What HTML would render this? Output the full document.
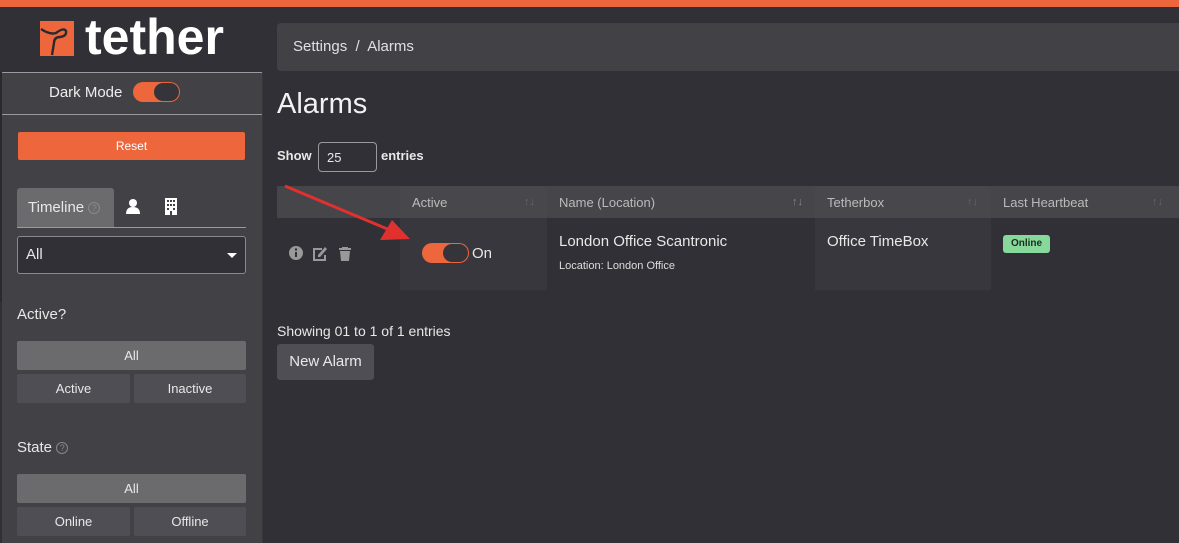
<!DOCTYPE html>
<html><head><style>
*{box-sizing:border-box;margin:0;padding:0}
body{width:1179px;height:543px;overflow:hidden;background:#313036;font-family:"Liberation Sans",sans-serif;color:#e8e8e8;position:relative}
.a{position:absolute}
.btn{position:absolute;text-align:center;font-size:13px;border-radius:2px}
.q{display:inline-block;width:12px;height:12px;border:1px solid #888;border-radius:50%;font-size:9px;line-height:10px;text-align:center;color:#888;vertical-align:1px}
</style></head><body>
<div class="a" style="left:0;top:0;width:1179px;height:7px;background:#ee663b"></div>
<div class="a" style="left:2px;top:7px;width:260px;height:65px;background:#313036"></div>
<div class="a" style="left:2px;top:72px;width:260px;height:471px;background:#424146;border-top:1px solid #9a9a9e"></div>
<div class="a" style="left:0;top:72px;width:2px;height:230px;background:#2a292e"></div>
<div class="a" style="left:262px;top:72px;width:1px;height:471px;background:#38373c"></div>
<div class="a" style="left:40px;top:21px;width:34px;height:35px;background:#ee663b"></div>
<svg class="a" style="left:40px;top:21px" width="34" height="35"><path d="M1 8 Q10 14 16 12 Q24 6 26 10 Q27 15 20 16 Q14 16 14 22 L12 34" fill="none" stroke="#2a2a2e" stroke-width="2.4"/></svg>
<div class="a" style="left:85px;top:8px;font-size:50px;font-weight:bold;color:#fff;letter-spacing:0px">tether</div>
<div class="a" style="left:2px;top:114px;width:260px;height:1px;background:#9a9a9e"></div>
<div class="a" style="left:49px;top:84px;font-size:15px;color:#eee">Dark Mode</div>
<div class="a" style="left:133px;top:82px;width:47px;height:20px;border-radius:10px;background:#ee663b"></div>
<div class="a" style="left:154px;top:83px;width:25px;height:18px;border-radius:9px;background:#35343a"></div>
<div class="btn" style="left:18px;top:132px;width:227px;height:28px;line-height:28px;background:#ee663b;color:#fff;font-size:12px">Reset</div>
<div class="a" style="left:17px;top:188px;width:97px;height:40px;background:#6b6b6d;border-radius:3px 3px 0 0"></div>
<div class="a" style="left:28px;top:199px;font-size:15px;color:#e8e8e8">Timeline <span class="q">?</span></div>
<svg class="a" style="left:125px;top:198px" width="16" height="16"><circle cx="8" cy="5" r="4" fill="#fff"/><path d="M1 16 Q1 9 8 9 Q15 9 15 16Z" fill="#fff"/></svg>
<svg class="a" style="left:164px;top:198px" width="14" height="17"><path d="M1 0H13V17H8V13H6V17H1Z" fill="#fff"/><g fill="#424146"><rect x="3" y="2" width="2" height="2"/><rect x="6" y="2" width="2" height="2"/><rect x="9" y="2" width="2" height="2"/><rect x="3" y="6" width="2" height="2"/><rect x="6" y="6" width="2" height="2"/><rect x="9" y="6" width="2" height="2"/><rect x="3" y="10" width="2" height="2"/><rect x="9" y="10" width="2" height="2"/></g></svg>
<div class="a" style="left:17px;top:227px;width:229px;height:1px;background:#9a9a9e"></div>
<div class="a" style="left:17px;top:236px;width:229px;height:38px;background:#303036;border:1px solid #8a8a8e;border-radius:3px"></div>
<div class="a" style="left:26px;top:246px;font-size:15px">All</div>
<div class="a" style="left:227px;top:253px;border-left:5px solid transparent;border-right:5px solid transparent;border-top:5px solid #fff"></div>
<div class="a" style="left:17px;top:306px;font-size:15px">Active?</div>
<div class="btn" style="left:17px;top:341px;width:229px;height:29px;line-height:29px;background:#6b6b6d">All</div>
<div class="btn" style="left:17px;top:374px;width:113px;height:29px;line-height:29px;background:#4f4e54">Active</div>
<div class="btn" style="left:134px;top:374px;width:112px;height:29px;line-height:29px;background:#4f4e54">Inactive</div>
<div class="a" style="left:17px;top:439px;font-size:15px">State <span class="q">?</span></div>
<div class="btn" style="left:17px;top:474px;width:229px;height:29px;line-height:29px;background:#6b6b6d">All</div>
<div class="btn" style="left:17px;top:507px;width:113px;height:29px;line-height:29px;background:#4f4e54">Online</div>
<div class="btn" style="left:134px;top:507px;width:112px;height:29px;line-height:29px;background:#4f4e54">Offline</div>
<div class="a" style="left:277px;top:23px;width:910px;height:48px;background:#424146;border-radius:4px"></div>
<div class="a" style="left:293px;top:38px;font-size:15px;color:#e0e0e0">Settings &nbsp;/&nbsp; Alarms</div>
<div class="a" style="left:277px;top:88px;font-size:29px;color:#f2f2f2">Alarms</div>
<div class="a" style="left:277px;top:148px;font-size:13px;font-weight:bold">Show</div>
<div class="a" style="left:318px;top:142px;width:59px;height:30px;border:1px solid #9a9a9e;border-radius:4px;font-size:13px;padding:7px 0 0 8px">25</div>
<div class="a" style="left:381px;top:148px;font-size:13px;font-weight:bold">entries</div>
<div class="a" style="left:277px;top:186px;width:902px;height:32px;background:#46454a"></div>
<div class="a" style="left:400px;top:186px;width:147px;height:104px;background:#4a494e;opacity:.55"></div>
<div class="a" style="left:815px;top:186px;width:176px;height:104px;background:#4a494e;opacity:.55"></div>
<div class="a" style="left:400px;top:218px;width:147px;height:72px;background:#38373d"></div>
<div class="a" style="left:815px;top:218px;width:176px;height:72px;background:#38373d"></div>
<div class="a" style="left:412px;top:195px;font-size:13px;color:#bbb">Active</div>
<div class="a" style="left:559px;top:195px;font-size:13px;color:#bbb">Name (Location)</div>
<div class="a" style="left:827px;top:195px;font-size:13px;color:#bbb">Tetherbox</div>
<div class="a" style="left:1003px;top:195px;font-size:13px;color:#bbb">Last Heartbeat</div>
<div class="a" style="left:524px;top:196px;font-size:11px;color:#666">↑↓</div>
<div class="a" style="left:792px;top:196px;font-size:11px;color:#888">↑↓</div>
<div class="a" style="left:967px;top:196px;font-size:11px;color:#666">↑↓</div>
<div class="a" style="left:1152px;top:196px;font-size:11px;color:#666">↑↓</div>
<svg class="a" style="left:288px;top:244px" width="70" height="18"><circle cx="8" cy="9" r="7" fill="#999"/><rect x="7" y="8" width="2" height="5" fill="#313036"/><circle cx="8" cy="5.5" r="1.2" fill="#313036"/><path d="M27 4H34V6H27V15H36V11H38V17H25V4Z" fill="#999"/><path d="M30 11L37 3L39 5L32 13H30Z" fill="#999"/><path d="M51 4H63V6H51Z M54 3H60V4H54Z M52 7H62L61 17H53Z" fill="#999"/></svg>
<div class="a" style="left:422px;top:243px;width:47px;height:20px;border-radius:10px;background:#ee663b"></div>
<div class="a" style="left:443px;top:244px;width:25px;height:18px;border-radius:9px;background:#35343a"></div>
<div class="a" style="left:472px;top:245px;font-size:15px">On</div>
<div class="a" style="left:559px;top:233px;font-size:15px">London Office Scantronic</div>
<div class="a" style="left:559px;top:260px;font-size:11px;color:#ddd">Location: London Office</div>
<div class="a" style="left:827px;top:233px;font-size:15px">Office TimeBox</div>
<div class="a" style="left:1003px;top:235px;width:47px;height:18px;background:#86d99a;border-radius:3px;color:#1e2a20;font-size:10px;font-weight:bold;text-align:center;line-height:18px">Online</div>
<svg class="a" style="left:280px;top:180px" width="140" height="70"><line x1="5" y1="6" x2="112" y2="51" stroke="#e0312f" stroke-width="3"/><path d="M130 59L100 60L112 40Z" fill="#e0312f"/></svg>
<div class="a" style="left:277px;top:323px;font-size:14px">Showing 01 to 1 of 1 entries</div>
<div class="btn" style="left:277px;top:344px;width:97px;height:36px;line-height:36px;background:#4f4e54;font-size:15px;border-radius:3px">New Alarm</div>
</body></html>
